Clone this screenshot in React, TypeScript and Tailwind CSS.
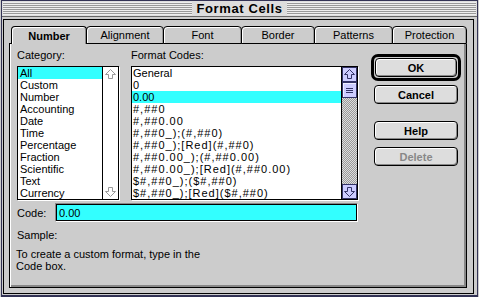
const categories = ["All", "Custom", "Number", "Accounting", "Date", "Time", "Percentage", "Fraction", "Scientific", "Text", "Currency"];

const codes = [
  "General",
  "0",
  "0.00",
  "#,##0",
  "#,##0.00",
  "#,##0_);(#,##0)",
  "#,##0_);[Red](#,##0)",
  "#,##0.00_);(#,##0.00)",
  "#,##0.00_);[Red](#,##0.00)",
  "$#,##0_);($#,##0)",
  "$#,##0_);[Red]($#,##0)",
];

const tabs = [
  { label: "Number", w: "w-[76px]", active: true },
  { label: "Alignment", w: "w-[78px] -ml-px" },
  { label: "Font", w: "w-[79px] -ml-px" },
  { label: "Border", w: "w-[74px] -ml-px" },
  { label: "Patterns", w: "w-[79px] -ml-px" },
  { label: "Protection", w: "w-[75px] -ml-px" },
];

function Arrow({ down, color }: { down?: boolean; color: string }) {
  return (
    <svg width="13" height="13" viewBox="0 0 13 13" className={down ? "rotate-180" : ""}>
      <path d="M6.5 1.5 L11.5 6.5 H8.5 V10.5 H4.5 V6.5 H1.5 Z" fill="none" stroke={color} strokeLinejoin="miter" />
    </svg>
  );
}

function Button({ label, disabled }: { label: string; disabled?: boolean }) {
  return (
    <div
      className={
        "h-[19px] flex items-center justify-center rounded-[4px] border border-black bg-[#dddddd] shadow-[inset_1px_1px_0_#fff,inset_-1px_-1px_0_#888] font-bold " +
        (disabled ? "text-[#888888]" : "text-black")
      }
    >
      {label}
    </div>
  );
}

export default function App() {
  return (
    <div className="w-[479px] h-[297px] bg-[#cccccc] pl-px font-['Liberation_Sans',Arial,sans-serif] text-[11px] leading-[12px] text-black select-none">
      <div className="w-[477px] h-[297px] border border-b-2 border-[#333355] flex flex-col">
        {/* title bar */}
        <div className="h-[16px] flex items-center gap-[5px] px-px bg-[#dddddd] border-b border-[#666666]">
          <div className="flex-1 h-[13px] bg-[repeating-linear-gradient(to_bottom,#eeeeee_0_1px,#999999_1px_2px)]" />
          <span className="font-bold text-[13px] leading-[14px] tracking-[0.6px]">Format Cells</span>
          <div className="flex-1 h-[13px] bg-[repeating-linear-gradient(to_bottom,#eeeeee_0_1px,#999999_1px_2px)]" />
        </div>

        <div className="flex-1 ml-px mr-[3px] mt-[2px] mb-px border border-black bg-[#cccccc] flex flex-col pl-[5px] pr-[6px] pt-[6px] pb-[5px]">
          {/* tabs */}
          <div className="flex h-[18px]">
            <div className="w-[2px] border-b border-black" />
            {tabs.map((t) =>
              t.active ? (
                <div
                  key={t.label}
                  className={t.w + " relative z-10 h-[18px] border border-b-0 border-black rounded-t-[4px] bg-[#cccccc] shadow-[inset_1px_1px_0_#fff,inset_-1px_0_0_#888] font-bold flex items-center justify-center"}
                >
                  {t.label}
                </div>
              ) : (
                <div
                  key={t.label}
                  className={t.w + " h-[18px] border border-black rounded-t-[4px] bg-[#cccccc] shadow-[inset_1px_1px_0_#fff,inset_-1px_0_0_#999] flex items-center justify-center"}
                >
                  {t.label}
                </div>
              )
            )}
          </div>

          {/* panel */}
          <div className="flex-1 border border-t-0 border-black bg-[#cccccc] shadow-[inset_1px_0_0_#fff,inset_-2px_-2px_0_#888] pl-[7px] pt-[5px]">
            <div className="flex">
              <div className="w-[102px]">
                <div>Category:</div>
                <div className="mt-[5px] h-[134px] border border-black bg-white flex shadow-[1px_1px_0_#fff]">
                  <div className="flex-1">
                    {categories.map((c, i) => (
                      <div key={c} className={"h-[12px] pl-[2px] whitespace-nowrap " + (i === 0 ? "bg-[#33ffff]" : "")}>
                        {c}
                      </div>
                    ))}
                  </div>
                  <div className="w-[16px] border-l border-black flex flex-col justify-between">
                    <div className="h-[15px] flex items-center justify-center">
                      <Arrow color="#999999" />
                    </div>
                    <div className="h-[15px] flex items-center justify-center">
                      <Arrow down color="#999999" />
                    </div>
                  </div>
                </div>
              </div>

              <div className="ml-[12px] w-[227px]">
                <div>Format Codes:</div>
                <div className="mt-[5px] h-[134px] border border-black bg-white flex shadow-[1px_1px_0_#fff]">
                  <div className="flex-1">
                    {codes.map((c, i) => (
                      <div
                        key={c}
                        className={
                          "h-[12px] pl-px whitespace-nowrap " +
                          (i === 2 ? "bg-[#33ffff] " : "") +
                          (c.includes("#") ? "tracking-[1px]" : "")
                        }
                      >
                        {c}
                      </div>
                    ))}
                  </div>
                  <div className="w-[16px] border-l border-black flex flex-col">
                    <div className="h-[15px] border border-[#333366] bg-[#ccccff] flex items-center justify-center">
                      <Arrow color="#333366" />
                    </div>
                    <div className="h-[16px] border border-[#333366] bg-[#ccccff] flex flex-col items-center justify-center gap-[1px] shadow-[inset_1px_1px_0_#eeeeff]">
                      <div className="w-[7px] h-px bg-[#333366]" />
                      <div className="w-[7px] h-px bg-[#333366]" />
                      <div className="w-[7px] h-px bg-[#333366]" />
                    </div>
                    <div className="flex-1 bg-[repeating-conic-gradient(#999999_0%_25%,#dddddd_0%_50%)] bg-[length:2px_2px]" />
                    <div className="h-[15px] border border-[#333366] bg-[#ccccff] flex items-center justify-center">
                      <Arrow down color="#333366" />
                    </div>
                  </div>
                </div>
              </div>

              <div className="ml-[13px] pt-[5px] flex flex-col">
                <div className="w-[90px] h-[27px] border-[3px] border-black rounded-[7px] p-px">
                  <Button label="OK" />
                </div>
                <div className="ml-[3px] w-[84px] mt-[4px]">
                  <Button label="Cancel" />
                </div>
                <div className="ml-[3px] w-[84px] mt-[17px]">
                  <Button label="Help" />
                </div>
                <div className="ml-[3px] w-[84px] mt-[7px]">
                  <Button label="Delete" disabled />
                </div>
              </div>
            </div>

            <div className="mt-[3px] flex items-center">
              <div className="w-[38px]">Code:</div>
              <div className="w-[303px] h-[19px] border border-t-[#888888] border-l-[#888888] border-b-white border-r-white">
                <div className="h-full border border-black bg-[#33ffff] pl-[2px] flex items-center">0.00</div>
              </div>
            </div>

            <div className="mt-[7px]">Sample:</div>
            <div className="mt-[7px] -ml-px">
              To create a custom format, type in the
              <br />
              Code box.
            </div>
          </div>
        </div>
      </div>
    </div>
  );
}
